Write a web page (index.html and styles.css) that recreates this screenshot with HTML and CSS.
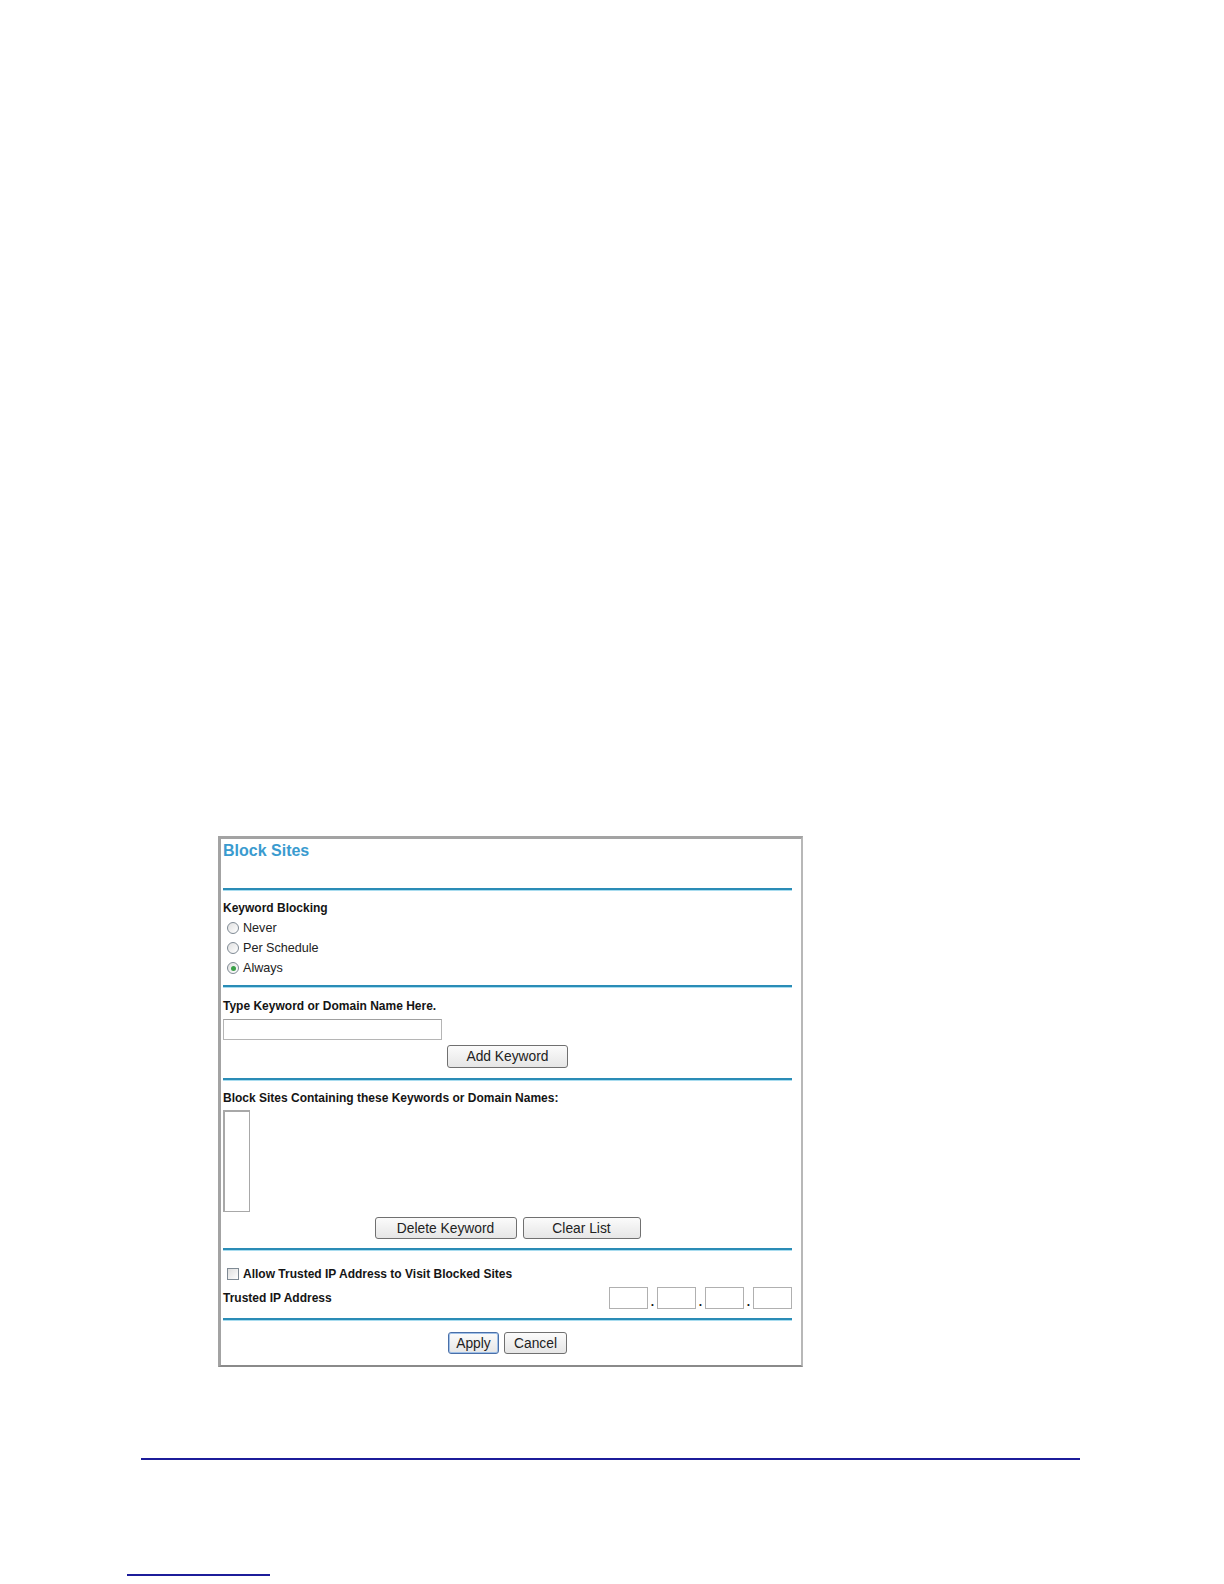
FILE: index.html
```html
<!DOCTYPE html>
<html>
<head>
<meta charset="utf-8">
<title>Block Sites</title>
<link rel="stylesheet" href="styles.css">
</head>
<body>
<div class="page">
  <div class="frame">
    <div class="header"><h1 class="title">Block Sites</h1></div>
    <div class="rule"></div>
    <div class="sec sec-kb">
      <div class="label">Keyword Blocking</div>
      <div class="opt"><span class="radio"></span><span>Never</span></div>
      <div class="opt"><span class="radio"></span><span>Per Schedule</span></div>
      <div class="opt"><span class="radio checked"></span><span>Always</span></div>
    </div>
    <div class="rule"></div>
    <div class="sec sec-type">
      <div class="label">Type Keyword or Domain Name Here.</div>
      <div class="textbox"></div>
      <div class="btnrow"><span class="btn w-add">Add Keyword</span></div>
    </div>
    <div class="rule"></div>
    <div class="sec sec-list">
      <div class="label">Block Sites Containing these Keywords or Domain Names:</div>
      <div class="listbox"></div>
      <div class="btnrow gap6"><span class="btn w-del">Delete Keyword</span><span class="btn w-clr">Clear List</span></div>
    </div>
    <div class="rule"></div>
    <div class="sec sec-trust">
      <div class="opt bold"><span class="check"></span><span>Allow Trusted IP Address to Visit Blocked Sites</span></div>
      <div class="iprow">
        <span class="label">Trusted IP Address</span>
        <span class="ip"><span class="ipbox"></span><span class="dot">.</span><span class="ipbox"></span><span class="dot">.</span><span class="ipbox"></span><span class="dot">.</span><span class="ipbox"></span></span>
      </div>
    </div>
    <div class="rule"></div>
    <div class="sec sec-actions">
      <div class="btnrow gap5"><span class="btn w-apply primary">Apply</span><span class="btn w-cancel">Cancel</span></div>
    </div>
  </div>
  <div class="footline"></div>
  <div class="shortline"></div>
</div>
</body>
</html>
```
FILE: styles.css
```css
* { box-sizing: border-box; }
html, body { margin: 0; padding: 0; background: #ffffff; }
body { font-family: "Liberation Sans", Arial, sans-serif; color: #151515; }
.page { padding-top: 836px; height: 1584px; overflow: hidden; }
.frame {
  margin-left: 218px;
  width: 585px;
  height: 531px;
  border-top: 3px solid #a3a3a3;
  border-left: 3px solid #a3a3a3;
  border-right: 2px solid #b8b8b8;
  border-bottom: 2px solid #8a8a8a;
  padding: 0 9px 0 2px;
  background: #fff;
}
.header { height: 49px; padding-top: 3px; }
.title { margin: 0; font-size: 16px; line-height: 18px; font-weight: bold; color: #3a9bcf; }
.rule { height: 2px; background: #2a8cb6; box-shadow: 0 1px 0 #a8dcef; }
.sec-kb { height: 95px; padding-top: 8px; }
.sec-type { height: 91px; padding-top: 9px; }
.sec-list { height: 168px; padding-top: 8px; }
.sec-trust { height: 68px; padding-top: 14px; }
.sec-actions { height: 45px; padding-top: 12px; }
.label { font-size: 12px; font-weight: bold; line-height: 20px; color: #151515; white-space: nowrap; }
.opt { display: flex; align-items: center; height: 20px; padding-left: 4px; font-size: 12.6px; color: #222; }
.opt.bold { font-weight: bold; color: #151515; font-size: 12px; }
.radio {
  width: 12px; height: 12px; border-radius: 50%;
  border: 1px solid #7f8a94;
  background: linear-gradient(135deg, #e0e0e0, #ffffff);
  margin-right: 4px; position: relative; flex: none;
}
.radio.checked::after {
  content: ""; position: absolute; left: 2.5px; top: 2.5px; width: 5px; height: 5px;
  border-radius: 50%; background: #3aa048;
}
.check {
  width: 12px; height: 12px; border: 1px solid #7f8a94;
  background: linear-gradient(135deg, #dedede, #ffffff);
  margin-right: 4px; flex: none;
}
.textbox { width: 219px; height: 21px; margin-top: 3px; border: 1px solid #b5b5b5; border-top-color: #a0a0a0; }
.btnrow { display: flex; justify-content: center; margin-top: 5px; }
.gap6 { gap: 6px; }
.gap5 { gap: 5px; margin-top: 0; }
.btn {
  height: 22px; display: flex; align-items: center; justify-content: center;
  border: 1px solid #707070; border-radius: 3px;
  background: linear-gradient(#fbfbfb, #e6e6e6);
  font-size: 13.8px; color: #222;
}
.w-add { width: 121px; height: 23px; }
.w-del { width: 142px; }
.w-clr { width: 118px; }
.w-apply { width: 51px; }
.w-cancel { width: 63px; }
.btn.primary { border-color: #4a6fa8; box-shadow: inset 0 0 0 1px #9fc0e8; }
.listbox { width: 27px; height: 102px; margin-top: 2px; border: 1px solid #a8a8a8; border-left-width: 2px; border-top-width: 2px; }
.iprow { display: flex; align-items: center; justify-content: space-between; height: 22px; margin-top: 3px; }
.ip { display: flex; align-items: flex-end; }
.ipbox { width: 39px; height: 22px; border: 1px solid #b0b0b0; }
.dot { width: 9px; text-align: center; font-size: 12px; font-weight: bold; line-height: 14px; }
.footline { margin: 91px 0 0 141px; width: 939px; height: 2px; background: #1c1c9a; }
.shortline { margin: 114px 0 0 127px; width: 143px; height: 2px; background: #1c1c9a; }
```
